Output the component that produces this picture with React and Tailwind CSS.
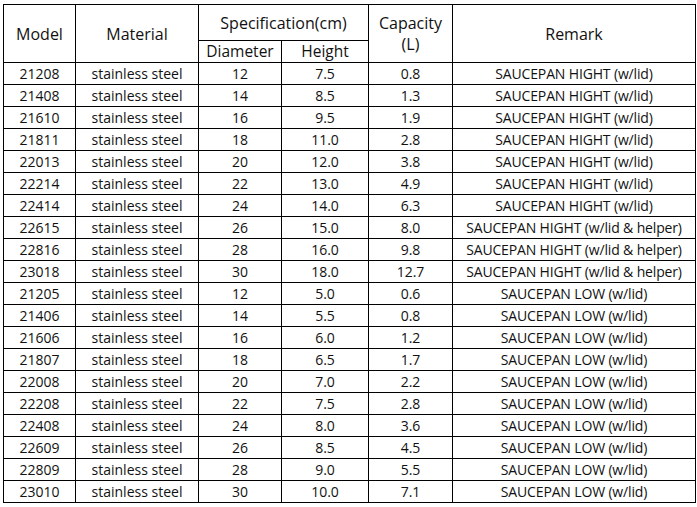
import React from 'react';

const ROWS = [
  ['21208', '12', '7.5', '0.8', 'SAUCEPAN HIGHT (w/lid)'],
  ['21408', '14', '8.5', '1.3', 'SAUCEPAN HIGHT (w/lid)'],
  ['21610', '16', '9.5', '1.9', 'SAUCEPAN HIGHT (w/lid)'],
  ['21811', '18', '11.0', '2.8', 'SAUCEPAN HIGHT (w/lid)'],
  ['22013', '20', '12.0', '3.8', 'SAUCEPAN HIGHT (w/lid)'],
  ['22214', '22', '13.0', '4.9', 'SAUCEPAN HIGHT (w/lid)'],
  ['22414', '24', '14.0', '6.3', 'SAUCEPAN HIGHT (w/lid)'],
  ['22615', '26', '15.0', '8.0', 'SAUCEPAN HIGHT (w/lid & helper)'],
  ['22816', '28', '16.0', '9.8', 'SAUCEPAN HIGHT (w/lid & helper)'],
  ['23018', '30', '18.0', '12.7', 'SAUCEPAN HIGHT (w/lid & helper)'],
  ['21205', '12', '5.0', '0.6', 'SAUCEPAN LOW (w/lid)'],
  ['21406', '14', '5.5', '0.8', 'SAUCEPAN LOW (w/lid)'],
  ['21606', '16', '6.0', '1.2', 'SAUCEPAN LOW (w/lid)'],
  ['21807', '18', '6.5', '1.7', 'SAUCEPAN LOW (w/lid)'],
  ['22008', '20', '7.0', '2.2', 'SAUCEPAN LOW (w/lid)'],
  ['22208', '22', '7.5', '2.8', 'SAUCEPAN LOW (w/lid)'],
  ['22408', '24', '8.0', '3.6', 'SAUCEPAN LOW (w/lid)'],
  ['22609', '26', '8.5', '4.5', 'SAUCEPAN LOW (w/lid)'],
  ['22809', '28', '9.0', '5.5', 'SAUCEPAN LOW (w/lid)'],
  ['23010', '30', '10.0', '7.1', 'SAUCEPAN LOW (w/lid)'],
];

const cell = 'border border-black text-center p-0';

export default function App() {
  return (
    <div className="w-[697px] h-[507px] bg-white pl-[3px] pt-[4px] text-[#111]"
      style={{ fontFamily: '"Open Sans", "Noto Sans", sans-serif' }}>
      <table className="border-collapse table-fixed w-[692px]">
        <colgroup>
          <col className="w-[72px]" />
          <col className="w-[123px]" />
          <col className="w-[83px]" />
          <col className="w-[87px]" />
          <col className="w-[84px]" />
          <col className="w-[243px]" />
        </colgroup>
        <thead>
          <tr className="h-[36px]">
            <th rowSpan={2} className={`${cell} font-normal text-[16px] leading-none`}>Model</th>
            <th rowSpan={2} className={`${cell} font-normal text-[16px] leading-none`}>Material</th>
            <th colSpan={2} className={`${cell} font-normal text-[16px] leading-none`}>Specification(cm)</th>
            <th rowSpan={2} className={`${cell} font-normal text-[16px] leading-[21px]`}>Capacity<br />(L)</th>
            <th rowSpan={2} className={`${cell} font-normal text-[16px] leading-none`}>Remark</th>
          </tr>
          <tr className="h-[22px]">
            <th className={`${cell} font-normal text-[15.5px] leading-none`}>Diameter</th>
            <th className={`${cell} font-normal text-[15.5px] leading-none`}>Height</th>
          </tr>
        </thead>
        <tbody className="text-[14px] leading-none">
          {ROWS.map(([model, dia, h, cap, remark]) => (
            <tr key={model} className="h-[22px]">
              <td className={cell}>{model}</td>
              <td className={cell}>stainless steel</td>
              <td className={cell}>{dia}</td>
              <td className={cell}>{h}</td>
              <td className={cell}>{cap}</td>
              <td className={`${cell} tracking-[-0.15px]`}>{remark}</td>
            </tr>
          ))}
        </tbody>
      </table>
    </div>
  );
}
